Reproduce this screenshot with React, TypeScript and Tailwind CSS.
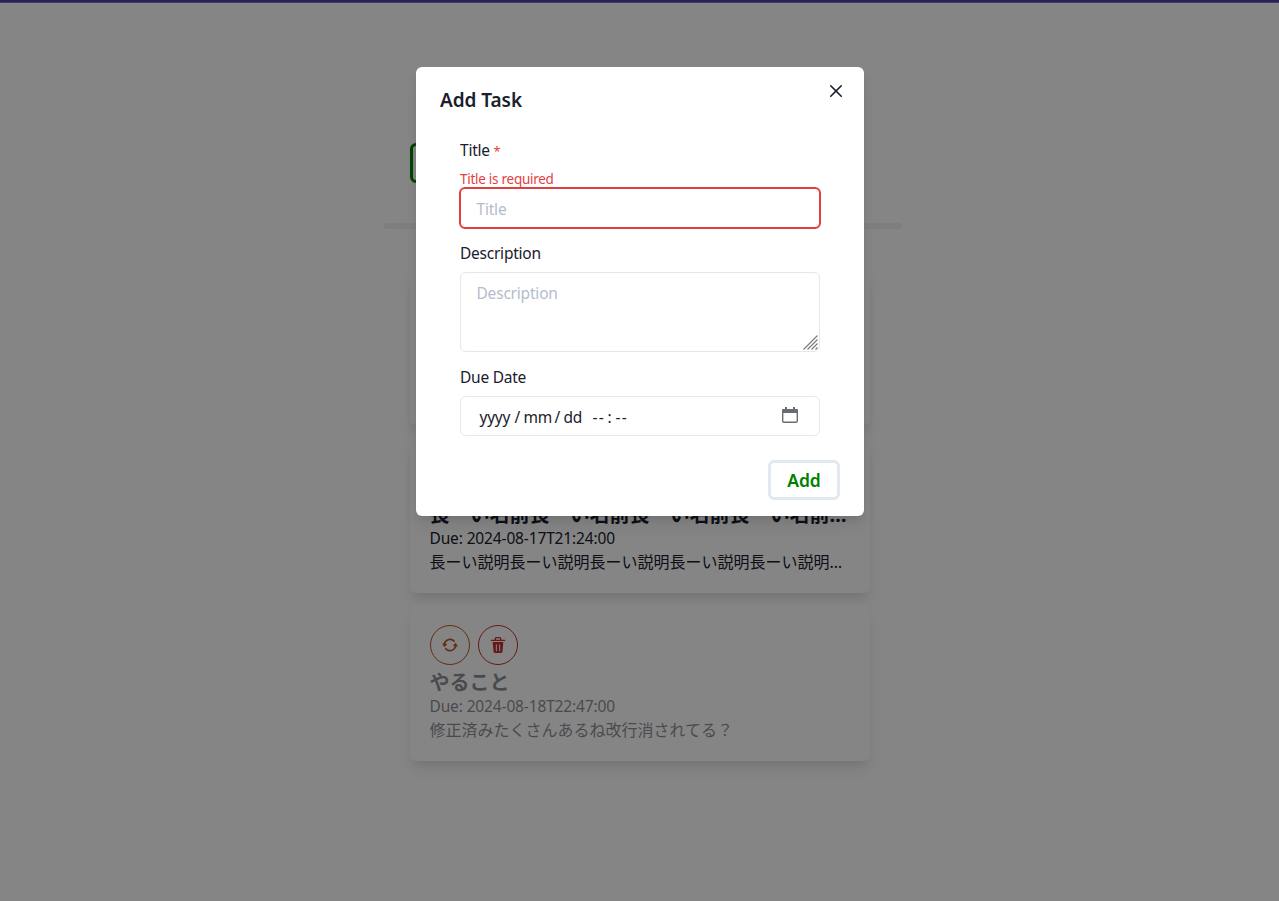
import type { ReactNode } from "react";

function RepeatIcon() {
  return (
    <svg viewBox="0 0 24 24" className="size-4" fill="currentColor">
      <path d="M10.319,4.936a7.239,7.239,0,0,1,7.1,2.252,1.25,1.25,0,1,0,1.872-1.657A9.737,9.737,0,0,0,9.743,2.5,10.269,10.269,0,0,0,2.378,9.61a.249.249,0,0,1-.271.178l-1.033-.13A.491.491,0,0,0,.6,9.877a.5.5,0,0,0-.019.526l2.476,4.342a.5.5,0,0,0,.373.248.43.43,0,0,0,.062,0,.5.5,0,0,0,.359-.152l3.477-3.593a.5.5,0,0,0-.3-.844L5.15,10.172a.25.25,0,0,1-.2-.333A7.7,7.7,0,0,1,10.319,4.936Z" />
      <path d="M23.406,14.1a.5.5,0,0,0,.015-.526l-2.5-4.329A.5.5,0,0,0,20.546,9a.489.489,0,0,0-.421.151l-3.456,3.614a.5.5,0,0,0,.3.842l1.848.221a.249.249,0,0,1,.183.117.253.253,0,0,1,.023.216,7.688,7.688,0,0,1-5.369,4.9,7.243,7.243,0,0,1-7.1-2.253,1.25,1.25,0,1,0-1.872,1.656,9.74,9.74,0,0,0,9.549,3.03,10.261,10.261,0,0,0,7.369-7.12.251.251,0,0,1,.27-.179l1.058.127a.422.422,0,0,0,.06,0A.5.5,0,0,0,23.406,14.1Z" />
    </svg>
  );
}

function DeleteIcon() {
  return (
    <svg viewBox="0 0 24 24" className="size-4" fill="currentColor">
      <path d="M19.452 7.5H4.547a.5.5 0 00-.5.545l1.287 14.136A2 2 0 007.326 24h9.347a2 2 0 001.992-1.819L19.95 8.045a.5.5 0 00-.129-.382.5.5 0 00-.369-.163zm-9.2 13a.75.75 0 01-1.5 0v-9a.75.75 0 011.5 0zm5 0a.75.75 0 01-1.5 0v-9a.75.75 0 011.5 0zM22 4h-4.75a.25.25 0 01-.25-.25V2.5A2.5 2.5 0 0014.5 0h-5A2.5 2.5 0 007 2.5v1.25a.25.25 0 01-.25.25H2a1 1 0 000 2h20a1 1 0 000-2zM9 3.75V2.5a.5.5 0 01.5-.5h5a.5.5 0 01.5.5v1.25a.25.25 0 01-.25.25h-5.5A.25.25 0 019 3.75z" />
    </svg>
  );
}

function CloseIcon() {
  return (
    <svg viewBox="0 0 24 24" className="size-3" fill="currentColor">
      <path d="M.439,21.44a1.5,1.5,0,0,0,2.122,2.121L11.823,14.3a.25.25,0,0,1,.354,0l9.262,9.263a1.5,1.5,0,1,0,2.122-2.121L14.3,12.177a.25.25,0,0,1,0-.354l9.263-9.262A1.5,1.5,0,0,0,21.439.44L12.177,9.7a.25.25,0,0,1-.354,0L2.561.44A1.5,1.5,0,0,0,.439,2.561L9.7,11.823a.25.25,0,0,1,0,.354Z" />
    </svg>
  );
}

function CalendarIcon() {
  return (
    <svg viewBox="0 0 16 16" className="mb-[2px] h-4 w-4 text-[#686c75]" fill="none">
      <rect x="0.7" y="2.7" width="14.6" height="12.6" rx="1.4" stroke="currentColor" strokeWidth="1.4" />
      <path d="M0 3.400q0-1.400 1.400-1.400h13.200q1.400 0 1.400 1.400V6H0zM3 0h2v3H3zM11 0h2v3h-2z" fill="currentColor" />
    </svg>
  );
}

function ResizeGrip() {
  return (
    <svg viewBox="0 0 15 15" className="absolute right-[1px] bottom-[1px] size-[15px] text-[#777]">
      <path
        d="M.5 14.5l14-14M4.500 14.5l10-10M8.500 14.5l6-6M12.500 14.5l2-2"
        stroke="currentColor"
        strokeWidth="1.1"
      />
    </svg>
  );
}

type Task = { title: string; due: string; text: string; done?: boolean };

const tasks: Task[] = [
  { title: "やること", due: "2024-08-17T20:00:00", text: "説明" },
  {
    title: "長ーい名前長ーい名前長ーい名前長ーい名前長ーい名前",
    due: "2024-08-17T21:24:00",
    text: "長ーい説明長ーい説明長ーい説明長ーい説明長ーい説明長ーい説明",
  },
  { title: "やること", due: "2024-08-18T22:47:00", text: "修正済みたくさんあるね改行消されてる？", done: true },
];

function TaskCard({ task }: { task: Task }) {
  return (
    <article className="h-[156px] rounded-md bg-white p-5 shadow-[0_10px_15px_-3px_rgba(0,0,0,0.1),0_4px_6px_-2px_rgba(0,0,0,0.05)]">
      <div className="flex gap-2">
        <button className="grid size-10 place-items-center rounded-full border border-[#c05621] text-[#c05621]">
          <RepeatIcon />
        </button>
        <button className="grid size-10 place-items-center rounded-full border border-[#c53030] text-[#c53030]">
          <DeleteIcon />
        </button>
      </div>
      <div className={task.done ? "opacity-50" : ""}>
        <h2 className="h-[29px] truncate pt-[6px] text-xl leading-6 font-bold">{task.title}</h2>
        <p className="text-[15.5px] leading-6 tracking-[-0.14px]">Due: {task.due}</p>
        <p className="truncate leading-6">{task.text}</p>
      </div>
    </article>
  );
}

function Label({ children }: { children: ReactNode }) {
  return <div className="mb-[7px] pl-[0.5px] text-[15.5px] leading-6 tracking-[-0.24px]">{children}</div>;
}

function TaskDialog() {
  return (
    <section
      role="dialog"
      className="h-[449px] w-[448px] rounded-md bg-white shadow-[0_10px_15px_-3px_rgba(0,0,0,0.1),0_4px_6px_-2px_rgba(0,0,0,0.05)]"
    >
      <header className="flex h-[71px] items-start justify-between pt-2 pr-3 pl-[24.5px]">
        <h1 className="pt-[11px] text-[19px] leading-[29px] font-semibold tracking-[-0.05px]">Add Task</h1>
        <button className="grid size-8 place-items-center" aria-label="Close">
          <CloseIcon />
        </button>
      </header>
      <div className="flex flex-col px-11">
        <Label>
          Title <span className="text-[13px] text-[#e53e3e]">*</span>
        </Label>
        <p className="-mt-px -mb-px h-[19px] pl-[0.5px] text-[13.5px] leading-5 tracking-[-0.27px] text-[#e53e3e]">
          Title is required
        </p>
        <div className="-mx-px flex h-[42px] items-center rounded-md border-2 border-[#e53e3e] px-4 pt-[3px] text-[15.5px] tracking-[-0.2px] text-[#b3bdcc]">
          Title
        </div>
        <div className="mt-3">
          <Label>Description</Label>
        </div>
        <div className="relative h-20 rounded-md border border-[#e2e8f0] px-4 py-[7px] text-[15.5px] leading-[26px] tracking-[-0.2px] text-[#b3bdcc]">
          Description
          <ResizeGrip />
        </div>
        <div className="mt-[13px]">
          <Label>Due Date</Label>
        </div>
        <div className="flex h-10 items-center justify-between rounded-md border border-[#e2e8f0] pr-[21px] pl-[19px] text-[15.5px]">
          <span className="flex pt-[4px] tracking-[-0.24px]">
            <span className="w-[35px]">yyyy</span>
            <span className="w-[9px]">/</span>
            <span className="w-[31px]">mm</span>
            <span className="w-[9px]">/</span>
            <span className="w-[29px]">dd</span>
            <span className="w-[15px] tracking-[1.2px]">--</span>
            <span className="w-[8px]">:</span>
            <span className="tracking-[1.2px]">--</span>
          </span>
          <CalendarIcon />
        </div>
      </div>
      <footer className="flex justify-end px-6 pt-6">
        <button className="h-10 w-[72px] rounded-md border-3 border-[#e2e8f0] pl-px text-[17.5px] font-semibold text-[#008000]">
          Add
        </button>
      </footer>
    </section>
  );
}

export default function App() {
  return (
    <div className="relative h-[901px] w-full overflow-hidden bg-white font-['Noto_Sans','Noto_Sans_CJK_JP',sans-serif] text-[#1a202c]">
      <div className="h-[3px] border-b border-[#8170e8] bg-[#553c9a]" />
      <main className="flex flex-col items-center pt-[140px]">
        <div className="w-[460px]">
          <button className="h-10 w-[72px] rounded-md border-3 border-[#008000] font-semibold text-[#008000]">Add</button>
        </div>
        <hr className="mt-10 mb-10 ml-[7px] h-[6px] w-[518px] rounded-full border-0 bg-[#e2e8f0] opacity-60" />
        <div className="flex w-[460px] flex-col gap-3">
          {tasks.map((task) => (
            <TaskCard key={task.due} task={task} />
          ))}
        </div>
      </main>
      <div className="absolute inset-0 flex items-start justify-center bg-black/48 pt-[67px]">
        <TaskDialog />
      </div>
    </div>
  );
}
